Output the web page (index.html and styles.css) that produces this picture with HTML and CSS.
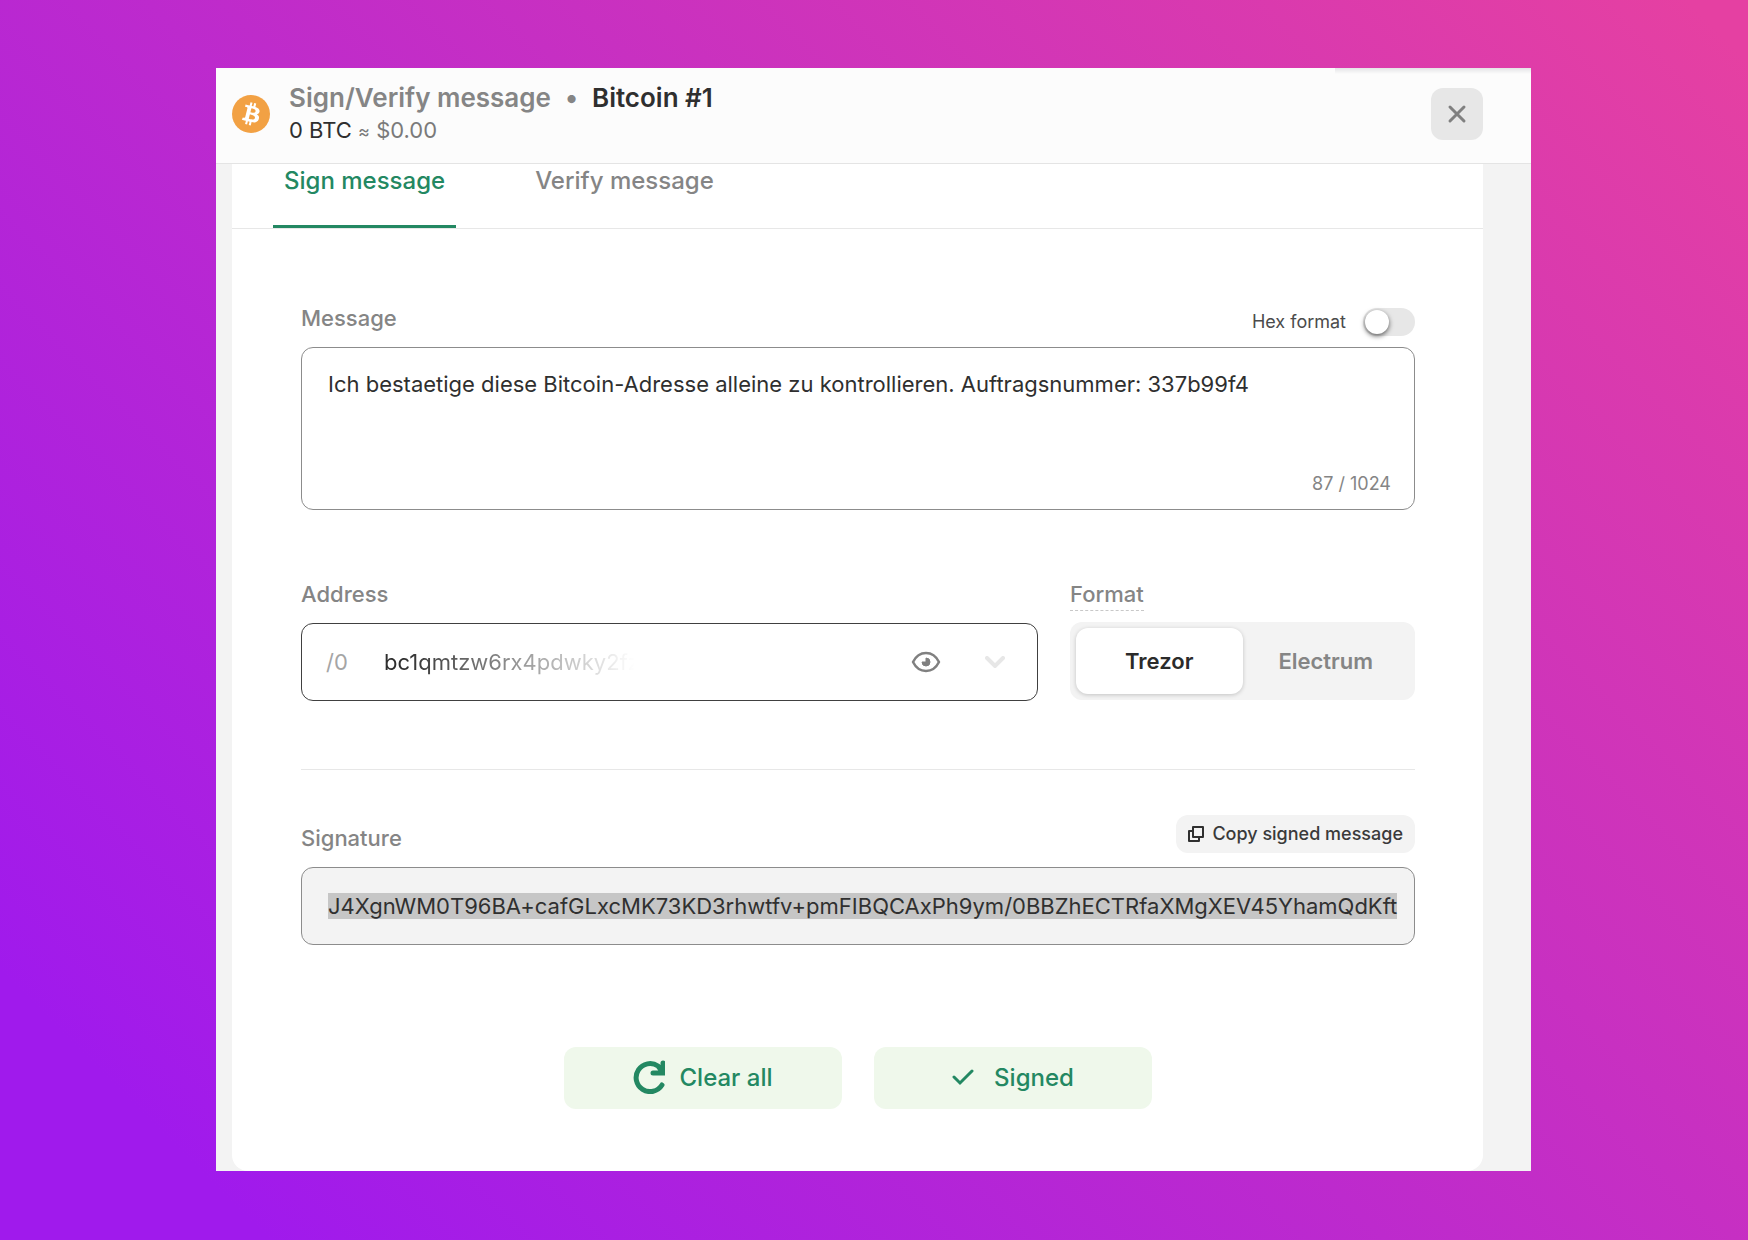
FILE: index.html
```html
<!DOCTYPE html>
<html lang="en">
  <head>
    <meta charset="UTF-8" />
    <meta name="viewport" content="width=device-width, initial-scale=1.0" />
    <title>Sign/Verify message</title>
    <link rel="stylesheet" href="styles.css">
  </head>
  <body>
    <div class="window">
      <header class="header">
        <svg class="coin" viewBox="0 0 32 32" aria-hidden="true">
          <circle cx="16" cy="16" r="16" fill="#f2a144"/>
          <path fill="#fff" d="M23.2 14c.3-2.1-1.3-3.2-3.500-4l.7-2.800-1.700-.4-.7 2.700-1.400-.3.7-2.700-1.700-.4-.7 2.800-1.100-.3-2.400-.6-.4 1.800s1.300.3 1.200.3c.7.2.8.6.8 1l-.8 3.200-1.100 4.500c-.1.2-.3.5-.8.4 0 0-1.200-.3-1.200-.3l-.8 2 2.200.5 1.200.3-.7 2.800 1.700.4.7-2.800 1.400.4-.7 2.700 1.700.4.7-2.800c2.900.6 5.100.3 6-2.300.7-2.100 0-3.300-1.600-4.100 1.100-.3 2-1 2.300-2.500zm-3.900 5.400c-.5 2.100-4 1-5.200.7l.9-3.700c1.200.3 4.900.8 4.300 3zm.5-5.500c-.5 1.900-3.400.9-4.300.7l.8-3.400c1 .3 4 .7 3.500 2.700z"/>
        </svg>
        <div class="account">
          <h1 class="title">
            <span class="title-section">Sign/Verify message</span>
            <span class="title-dot">•</span>
            <span class="title-name">Bitcoin #1</span>
          </h1>
          <p class="balance">0 BTC <span class="fiat"><small>≈</small> $0.00</span></p>
        </div>
        <button class="close-btn" aria-label="Close">
          <svg viewBox="0 0 20 20" width="20" height="20"><path d="M3 3l14 14M17 3L3 17"/></svg>
        </button>
      </header>

      <main class="card">
        <nav class="tabs">
          <a href="#sign" class="tab active">Sign message</a>
          <a href="#verify" class="tab">Verify message</a>
        </nav>

        <form class="form">
          <div class="field">
            <div class="field-head">
              <label for="message">Message</label>
              <label class="hex">Hex format <input type="checkbox" class="switch"></label>
            </div>
            <div class="message-box">
              <textarea id="message" class="input message" maxlength="1024">Ich bestaetige diese Bitcoin-Adresse alleine zu kontrollieren. Auftragsnummer: 337b99f4</textarea>
              <span class="counter">87 / 1024</span>
            </div>
          </div>

          <div class="row">
            <div class="field address-field">
              <div class="field-head"><label for="address">Address</label></div>
              <div class="input address-box">
                <span class="path">/0</span>
                <select id="address" class="address">
                  <option>bc1qmtzw6rx4pdwky2fz</option>
                </select>
                <svg class="eye" viewBox="0 0 30 22" width="30" height="22" aria-hidden="true">
                  <path d="M2 11C5 5 9.500 2 15 2s10 3 13 9c-3 6-7.500 9-13 9S5 17 2 11z" fill="none" stroke="#808080" stroke-width="2.500" stroke-linejoin="round"/>
                  <path d="M15 7v4h-4a4 4 0 1 0 4-4z" fill="#808080" stroke="#808080" stroke-linejoin="round"/>
                </svg>
                <svg class="chevron" viewBox="0 0 20 12" width="20" height="12" aria-hidden="true"><path d="M2 2l8 8 8-8"/></svg>
              </div>
            </div>
            <fieldset class="field format-field">
              <div class="field-head"><span class="hint">Format</span></div>
              <div class="segments">
                <label class="segment"><input type="radio" name="format" checked>Trezor</label>
                <label class="segment"><input type="radio" name="format">Electrum</label>
              </div>
            </fieldset>
          </div>

          <hr class="divider">

          <div class="field">
            <div class="field-head">
              <label for="signature">Signature</label>
              <button type="button" class="copy-btn">
                <svg viewBox="0 0 16 16" width="16" height="16"><path d="M5 1h10v10H5zM5 5H1v10h10v-4"/></svg>
                Copy signed message
              </button>
            </div>
            <input type="text" id="signature" class="input signature" readonly value="J4XgnWM0T96BA+cafGLxcMK73KD3rhwtfv+pmFIBQCAxPh9ym/0BBZhECTRfaXMgXEV45YhamQdKft">
          </div>

          <div class="actions">
            <button type="button" class="action-btn">
              <svg viewBox="0 0 32 34" width="32" height="34"><path d="M29 25A14 14 0 1 1 25 6l3 4M30 3v10H20" stroke-width="5"/></svg>
              Clear all
            </button>
            <button type="button" class="action-btn signed">
              <svg viewBox="0 0 22 18" width="22" height="18"><path d="M2 9l6 6L20 3" stroke-width="3"/></svg>
              Signed
            </button>
          </div>
        </form>
      </main>
    </div>

    <script src="main.js"></script>
  </body>
</html>
```
FILE: styles.css
```css
* {
  margin: 0;
  padding: 0;
  box-sizing: border-box;
}

body {
  font-family: Inter, sans-serif;
  font-size: 22px;
  color: #2f2f2f;
  background: linear-gradient(45deg, #a01aec 9%, #e540a2 98%);
  min-height: 100vh;
  padding: 68px 217px 68px 216px;
}

button, input, select, textarea {
  font: inherit;
  color: inherit;
}

button {
  border: none;
  cursor: pointer;
}

svg {
  flex: none;
}

.window {
  background: #f3f3f3;
  overflow: hidden;
}

.header {
  position: relative;
  display: flex;
  align-items: center;
  height: 96px;
  padding: 0 48px 4px 16px;
  background: #fcfcfc;
  border-bottom: 1px solid #e4e4e4;
}

.header::after {
  content: '';
  position: absolute;
  top: 0;
  right: 0;
  width: 196px;
  height: 6px;
  background: linear-gradient(#e4e4e6, #fcfcfc);
}

.coin {
  width: 38px;
  height: 38px;
}

.account {
  flex: 1;
  margin-left: 19px;
  padding-top: 2px;
}

.title {
  display: flex;
  gap: 14px;
  font-size: 26px;
  line-height: 32px;
  font-weight: 600;
}

.title-section,
.title-dot {
  color: #858585;
}

.balance {
  line-height: 32px;
}

.fiat {
  color: #7a7a7a;
}

.fiat small {
  font-size: 18px;
}

.close-btn {
  display: grid;
  place-items: center;
  width: 52px;
  height: 52px;
  border-radius: 12px;
  background: #e7e7e7;
}

.close-btn path {
  stroke: #808080;
  stroke-width: 3;
  stroke-linecap: round;
}

.card {
  margin: 0 48px 0 16px;
  background: #fff;
  border-radius: 0 0 16px 16px;
}

.tabs {
  display: flex;
  gap: 68px;
  padding: 0 41px;
  border-bottom: 1px solid #e7e7e7;
}

.tab {
  height: 64px;
  padding: 0 11px;
  border-bottom: 3px solid transparent;
  color: #858585;
  font-size: 24px;
  line-height: 34px;
  font-weight: 500;
  text-decoration: none;
}

.tab.active {
  border-color: #238862;
  color: #238862;
}

.form {
  padding: 71px 68px 62px 69px;
}

.field {
  border: none;
}

.field-head {
  display: flex;
  justify-content: space-between;
  align-items: flex-end;
  min-height: 46px;
  padding-bottom: 11px;
  color: #858585;
  line-height: 36px;
  font-weight: 500;
}

.field-head .hex {
  display: flex;
  align-items: center;
  gap: 17px;
  color: #4b4b4b;
  font-size: 18px;
  line-height: 28px;
  font-weight: 400;
}

.switch {
  appearance: none;
  width: 52px;
  height: 28px;
  padding: 2px;
  border-radius: 14px;
  background: #e7e7e7;
}

.switch::before {
  content: '';
  display: block;
  width: 24px;
  height: 24px;
  border-radius: 50%;
  background: #fff;
  box-shadow: 0 2px 5px rgba(0, 0, 0, 0.6);
}

.switch:checked::before {
  margin-left: auto;
}

.input {
  display: block;
  width: 100%;
  border: 1px solid #8c8c8c;
  border-radius: 12px;
  background: #fff;
  outline: none;
}

.message-box {
  position: relative;
}

.message {
  height: 163px;
  padding: 22px 26px;
  line-height: 28px;
  resize: none;
}

.counter {
  position: absolute;
  right: 24px;
  bottom: 12px;
  color: #858585;
  font-size: 18px;
  line-height: 28px;
}

.row {
  display: flex;
  gap: 32px;
  margin-top: 66px;
}

.address-field {
  flex: 1;
}

.format-field {
  width: 345px;
}

.address-box {
  display: flex;
  align-items: center;
  height: 78px;
  padding: 0 32px 0 24px;
  border-color: #404040;
}

.path {
  width: 58px;
  color: #a5a5a5;
}

.address {
  flex: 1;
  appearance: none;
  border: none;
  background: none;
  outline: none;
  -webkit-mask-image: linear-gradient(to right, #000 20px, transparent 250px);
  mask-image: linear-gradient(to right, #000 20px, transparent 250px);
}

.chevron {
  margin-left: 44px;
}

.chevron path {
  fill: none;
  stroke: #e7e7e7;
  stroke-width: 4;
  stroke-linecap: round;
}

.hint {
  line-height: 32px;
  border-bottom: 1px dashed #c8c8c8;
}

.segments {
  display: flex;
  height: 78px;
  padding: 6px;
  border-radius: 12px;
  background: #f3f3f3;
}

.segment {
  flex: 1;
  display: grid;
  place-items: center;
  border-radius: 12px;
  color: #858585;
  font-weight: 600;
}

.segment input {
  position: absolute;
  opacity: 0;
}

.segment:has(input:checked) {
  background: #fff;
  color: #2b2b2b;
  box-shadow: 0 1px 4px rgba(0, 0, 0, 0.2);
}

.divider {
  border: none;
  border-top: 1px solid #e7e7e7;
  margin: 68px 0 45px;
}

.copy-btn {
  display: flex;
  align-items: center;
  gap: 8px;
  height: 38px;
  margin-bottom: 3px;
  padding: 0 12px;
  border-radius: 12px;
  background: #f3f3f3;
  color: #3a3a3a;
  font-size: 18px;
  font-weight: 500;
}

.copy-btn path {
  fill: none;
  stroke: #303030;
  stroke-width: 2;
  stroke-linejoin: round;
}

.signature {
  height: 78px;
  padding: 0 12px 0 26px;
  line-height: 30px;
  background: #f3f3f3;
}

.signature::selection {
  background: #c6c6c6;
  color: #303030;
}

.actions {
  display: flex;
  justify-content: center;
  gap: 32px;
  margin-top: 102px;
}

.action-btn {
  display: flex;
  align-items: center;
  justify-content: center;
  gap: 14px;
  width: 278px;
  height: 62px;
  padding-bottom: 2px;
  border-radius: 12px;
  background: #eff8eb;
  color: #238862;
  font-size: 24px;
  font-weight: 500;
}

.action-btn.signed {
  gap: 20px;
}

.action-btn path {
  fill: none;
  stroke: #238862;
  stroke-linecap: round;
}
```
FILE: main.js
```js
const signature = document.getElementById('signature');

// keep the signature ready to copy
signature.focus({ preventScroll: true });
signature.select();
```
